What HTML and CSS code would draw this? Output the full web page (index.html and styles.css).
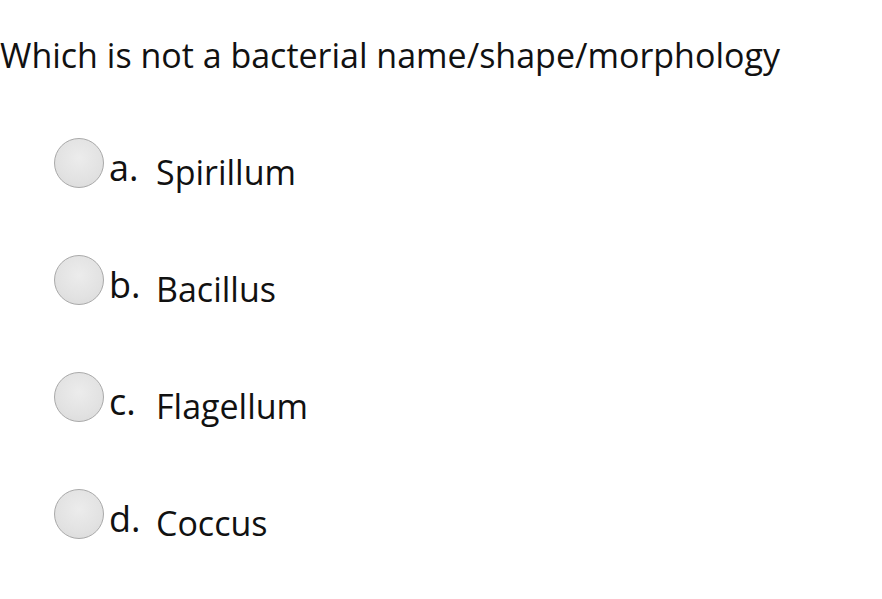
FILE: index.html
```html
<!DOCTYPE html>
<html>
<head>
<meta charset="utf-8">
<link rel="stylesheet" href="styles.css">
</head>
<body>
<div class="question">Which is not a bacterial name/shape/morphology</div>
<div class="answers">
  <div class="option"><span class="radio"></span><span class="label">a.</span><span class="text">Spirillum</span></div>
  <div class="option"><span class="radio"></span><span class="label">b.</span><span class="text">Bacillus</span></div>
  <div class="option"><span class="radio"></span><span class="label">c.</span><span class="text">Flagellum</span></div>
  <div class="option"><span class="radio"></span><span class="label">d.</span><span class="text">Coccus</span></div>
</div>
</body>
</html>
```
FILE: styles.css
```css
html, body {
  margin: 0;
  padding: 0;
  background: #ffffff;
}
body {
  font-family: "Open Sans", sans-serif;
  color: #111111;
  width: 882px;
  height: 599px;
  overflow: hidden;
}
.question {
  font-size: 34px;
  line-height: 48px;
  padding-top: 31px;
  white-space: nowrap;
}
.answers {
  display: flex;
  flex-direction: column;
  gap: 67px;
  padding-left: 54px;
  padding-top: 59px;
}
.option {
  display: flex;
  align-items: flex-start;
  height: 50px;
}
.radio {
  width: 48px;
  height: 48px;
  border-radius: 50%;
  border: 1px solid #a9a9a9;
  background: radial-gradient(circle at 50% 40%, #ececec 0%, #e2e2e2 60%, #d8d8d8 100%);
  flex: none;
}
.label {
  font-size: 36px;
  margin-left: 5px;
  margin-top: 5px;
  width: 47px;
}
.text {
  font-size: 34px;
  margin-top: 11px;
}
```
